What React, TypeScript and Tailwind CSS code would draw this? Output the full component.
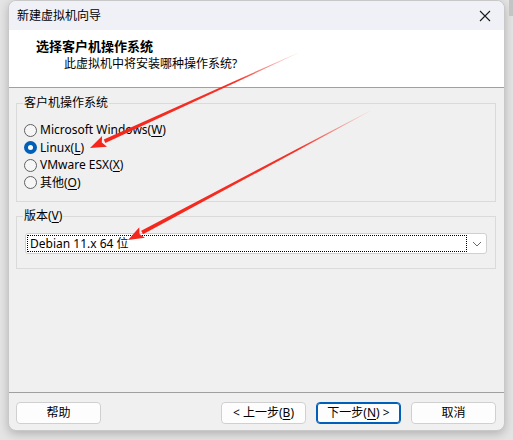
import React from 'react';

type Pt = [number, number];

// tapered red annotation arrow, from tail to tip
function arrowPaths(tail: Pt, tip: Pt, head = 16, half = 6, shaft = 1.9) {
  const dx = tip[0] - tail[0];
  const dy = tip[1] - tail[1];
  const len = Math.hypot(dx, dy);
  const ux = dx / len;
  const uy = dy / len;
  const nx = -uy;
  const ny = ux;
  const bx = tip[0] - ux * head;
  const by = tip[1] - uy * head;
  const p = (x: number, y: number) => `${x.toFixed(1)},${y.toFixed(1)}`;
  const shaftPts = [
    p(tail[0] + nx * 0.3, tail[1] + ny * 0.3),
    p(bx + nx * shaft, by + ny * shaft),
    p(bx - nx * shaft, by - ny * shaft),
    p(tail[0] - nx * 0.3, tail[1] - ny * 0.3),
  ].join(' ');
  const headPts = [
    p(tip[0], tip[1]),
    p(bx + nx * half, by + ny * half),
    p(bx + ux * 3, by + uy * 3),
    p(bx - nx * half, by - ny * half),
  ].join(' ');
  return { shaftPts, headPts };
}

function Arrow({ id, tail, tip }: { id: string; tail: Pt; tip: Pt }) {
  const { shaftPts, headPts } = arrowPaths(tail, tip);
  return (
    <g>
      <defs>
        <linearGradient id={id} gradientUnits="userSpaceOnUse" x1={tail[0]} y1={tail[1]} x2={tip[0]} y2={tip[1]}>
          <stop offset="0" stopColor="#f5261b" stopOpacity="0.05" />
          <stop offset="0.3" stopColor="#f5261b" stopOpacity="0.95" />
          <stop offset="1" stopColor="#f5261b" stopOpacity="1" />
        </linearGradient>
      </defs>
      <polygon points={shaftPts} fill={`url(#${id})`} />
      <polygon points={headPts} fill="#f5261b" />
    </g>
  );
}

function Acc({ ch }: { ch: string }) {
  return <span className="underline underline-offset-2">{ch}</span>;
}

function Radio({ checked, children }: { checked?: boolean; children: React.ReactNode }) {
  return (
    <div className="flex items-center h-[17.5px]">
      {checked ? (
        <span className="w-[13px] h-[13px] rounded-full bg-[#005fb8] flex items-center justify-center">
          <span className="w-[5px] h-[5px] rounded-full bg-white" />
        </span>
      ) : (
        <span className="w-[13px] h-[13px] rounded-full border border-[#606060] bg-[#f6f6f6]" />
      )}
      <span className="ml-[3px]">{children}</span>
    </div>
  );
}

function Btn({ children, focus }: { children: React.ReactNode; focus?: boolean }) {
  return (
    <button
      className={
        'w-[85px] h-[22px] rounded-[4px] bg-[#fdfdfd] text-[12px] text-black flex items-center justify-center ' +
        (focus ? 'border border-[#005fb8] shadow-[inset_0_0_0_1px_#005fb8]' : 'border border-[#d0d0d0]')
      }
    >
      {children}
    </button>
  );
}

export default function App() {
  return (
    <div className="relative w-[513px] h-[440px] bg-[#e4e4e4] overflow-hidden font-['Noto_Sans','Noto_Sans_CJK_SC',sans-serif] text-[12px] text-black">
      <div className="absolute right-0 top-0 w-[4px] h-[16px] bg-[#c4c4c4]" />
      <div className="ml-[8px] w-[497px] h-[431px] border border-[#c8c8c8] rounded-[8px] overflow-hidden flex flex-col bg-[#f0f0f0] shadow-[0_3px_10px_rgba(0,0,0,0.22)]">
        {/* title bar */}
        <div className="h-[29px] bg-[#eff1f7] flex items-center justify-between pl-[8px] pr-[10px]">
          <span className="text-[12px] leading-none">新建虚拟机向导</span>
          <svg width="12" height="12" viewBox="0 0 12 12" className="mr-[3px]">
            <path d="M1 1 L11 11 M11 1 L1 11" stroke="#1a1a1a" strokeWidth="1.1" />
          </svg>
        </div>
        {/* header */}
        <div className="h-[58px] bg-white border-b border-[#a0a0a0] pl-[27px] pt-[7px]">
          <div className="text-[13px] font-bold leading-[18px]">选择客户机操作系统</div>
          <div className="pl-[28px] leading-[18px]">此虚拟机中将安装哪种操作系统?</div>
        </div>
        {/* body */}
        <div className="flex-1 flex flex-col pt-[15px] pl-[7px] pr-[8px]">
          <div className="relative h-[99px] border border-[#dadada] pt-[17.5px] pl-[7px]">
            <span className="absolute -top-[9px] left-[6px] px-[1px] bg-[#f0f0f0] leading-[16px]">客户机操作系统</span>
            <Radio>
              Microsoft Windows(<Acc ch="W" />)
            </Radio>
            <Radio checked>
              Linux(<Acc ch="L" />)
            </Radio>
            <Radio>
              VMware ESX(<Acc ch="X" />)
            </Radio>
            <Radio>
              其他(<Acc ch="O" />)
            </Radio>
          </div>
          <div className="relative h-[53px] mt-[14px] border border-[#dadada] pt-[16px] px-[8px]">
            <span className="absolute -top-[9px] left-[6px] px-[1px] bg-[#f0f0f0] leading-[16px]">
              版本(<Acc ch="V" />)
            </span>
            <div className="h-[21px] bg-white border border-[#d0d0d0] rounded-[3px] flex items-center pl-[1px] pr-[4px]">
              <div className="flex-1 h-[17px] border border-dotted border-black flex items-center pl-[2px] mr-[5px]">
                Debian 11.x 64 位
              </div>
              <svg width="10" height="6" viewBox="0 0 10 6">
                <path d="M1 1 L5 5 L9 1" stroke="#6a6a6a" strokeWidth="1" fill="none" />
              </svg>
            </div>
          </div>
        </div>
        {/* footer */}
        <div className="h-[38px] border-t border-[#a0a0a0] flex items-start pt-[9px] pl-[7px] pr-[8px]">
          <Btn>帮助</Btn>
          <div className="flex-1" />
          <div className="flex gap-[10px]">
            <Btn>
              &lt; 上一步(<Acc ch="B" />)
            </Btn>
            <Btn focus>
              下一步(<Acc ch="N" />) &gt;
            </Btn>
            <Btn>取消</Btn>
          </div>
        </div>
      </div>
      <svg className="absolute inset-0 pointer-events-none" width="513" height="440">
        <Arrow id="a1" tail={[298, 53]} tip={[90, 148]} />
        <Arrow id="a2" tail={[370, 111]} tip={[128, 240]} />
      </svg>
    </div>
  );
}
